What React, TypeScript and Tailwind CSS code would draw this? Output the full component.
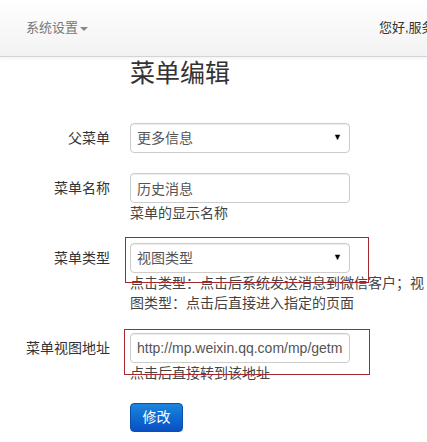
import type { ReactNode } from "react";

const field =
  "h-[30px] w-[220px] rounded-[4px] border border-[#ccc] bg-white px-[6px] text-[14px] text-[#555] shadow-[inset_0_1px_1px_rgba(0,0,0,0.075)]";

const FakeSelect = ({ value }: { value: string }) => {
  return (
    <div className={`${field} flex items-center justify-between`}>
      <span>{value}</span>
      <span className="pr-[1px] text-[9px] text-black">▼</span>
    </div>
  );
};

type GroupProps = {
  label: string;
  help?: string;
  mark?: string;
  children: ReactNode;
};

// one row of the horizontal form
const Group = ({ label, help, mark, children }: GroupProps) => {
  return (
    <div className="mb-5 grid grid-cols-[110px_1fr] gap-x-5">
      <label className="text-right text-[14px] leading-[30px] text-[#333]">
        {label}
      </label>
      <div className="relative">
        {children}
        {help && (
          <p className="w-[296px] text-[14px] leading-[20px] text-[#444]">
            {help}
          </p>
        )}
        {mark && (
          <div
            className={`pointer-events-none absolute border border-[#a8282d] ${mark}`}
          />
        )}
      </div>
    </div>
  );
};

export default function App() {
  return (
    <div className="h-[442px] w-[427px] overflow-hidden bg-white font-['Liberation_Sans','Noto_Sans_CJK_SC',sans-serif]">
      <nav className="grid h-[57px] grid-cols-[379px_1fr] items-center border-b border-[#d4d4d4] bg-gradient-to-b from-white to-[#f2f2f2] shadow-[0_1px_4px_rgba(0,0,0,0.065)]">
        <div className="flex items-center gap-[2px] pl-[26px] text-[13px] text-[#777]">
          系统设置
          <span className="mt-[1px] h-0 w-0 border-x-[4px] border-t-[4px] border-x-transparent border-t-[#888]" />
        </div>
        <div className="whitespace-nowrap text-[13px] text-[#333]">
          您好,服务号管理员
        </div>
      </nav>

      <h1 className="ml-[130px] text-[25px] leading-[32px] text-[#333]">
        菜单编辑
      </h1>

      <form className="mt-[34px]">
        <Group label="父菜单">
          <FakeSelect value="更多信息" />
        </Group>

        <Group label="菜单名称" help="菜单的显示名称">
          <input className={field} defaultValue="历史消息" />
        </Group>

        <Group
          label="菜单类型"
          help="点击类型：点击后系统发送消息到微信客户；视图类型：点击后直接进入指定的页面"
          mark="-left-[5px] -top-[6px] h-[46px] w-[244px]"
        >
          <FakeSelect value="视图类型" />
        </Group>

        <Group
          label="菜单视图地址"
          help="点击后直接转到该地址"
          mark="-left-[6px] -top-[4px] h-[46px] w-[246px]"
        >
          <input
            className={field}
            defaultValue="http://mp.weixin.qq.com/mp/getmasssendmsg?__biz=MzA3"
          />
        </Group>

        <div className="ml-[130px]">
          <button
            type="button"
            className="h-[29px] w-[53px] rounded-[4px] border border-[#0a4fb0] bg-gradient-to-b from-[#1c86dc] to-[#0b4fc4] text-[14px] text-white"
          >
            修改
          </button>
        </div>
      </form>
    </div>
  );
}
